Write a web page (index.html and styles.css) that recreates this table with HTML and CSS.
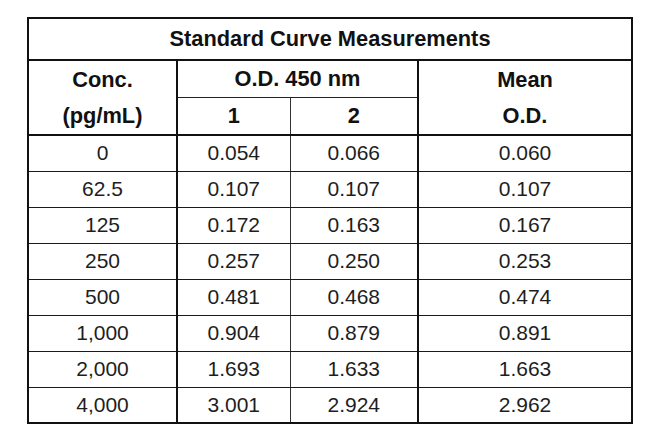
FILE: index.html
```html
<!DOCTYPE html>
<html>
<head>
<meta charset="utf-8">
<link rel="stylesheet" href="styles.css">
</head>
<body>
<div class="page">
  <table class="curve">
    <colgroup>
      <col class="c1">
      <col class="c2">
      <col class="c3">
      <col class="c4">
    </colgroup>
    <tr class="title-row">
      <th colspan="4" class="title">Standard Curve Measurements</th>
    </tr>
    <tr class="head1">
      <th rowspan="2" class="main-v two-line">Conc.<br>(pg/mL)</th>
      <th colspan="2" class="main-v sub-b">O.D. 450 nm</th>
      <th rowspan="2" class="two-line">Mean<br>O.D.</th>
    </tr>
    <tr class="head2">
      <th class="thin-v">1</th>
      <th class="main-v">2</th>
    </tr>
    <tr class="data first"><td class="main-v">0</td><td class="thin-v">0.054</td><td class="main-v">0.066</td><td>0.060</td></tr>
    <tr class="data"><td class="main-v">62.5</td><td class="thin-v">0.107</td><td class="main-v">0.107</td><td>0.107</td></tr>
    <tr class="data"><td class="main-v">125</td><td class="thin-v">0.172</td><td class="main-v">0.163</td><td>0.167</td></tr>
    <tr class="data"><td class="main-v">250</td><td class="thin-v">0.257</td><td class="main-v">0.250</td><td>0.253</td></tr>
    <tr class="data"><td class="main-v">500</td><td class="thin-v">0.481</td><td class="main-v">0.468</td><td>0.474</td></tr>
    <tr class="data"><td class="main-v">1,000</td><td class="thin-v">0.904</td><td class="main-v">0.879</td><td>0.891</td></tr>
    <tr class="data"><td class="main-v">2,000</td><td class="thin-v">1.693</td><td class="main-v">1.633</td><td>1.663</td></tr>
    <tr class="data last"><td class="main-v">4,000</td><td class="thin-v">3.001</td><td class="main-v">2.924</td><td>2.962</td></tr>
  </table>
</div>
</body>
</html>
```

FILE: styles.css
```css
html, body {
  margin: 0;
  padding: 0;
  background: #ffffff;
}

.page {
  padding: 17px 0 0 27px;
}

.curve {
  border-collapse: collapse;
  table-layout: fixed;
  width: 606px;
  border: 2px solid #111;
  font-family: "Liberation Sans", Arial, sans-serif;
  font-size: 21px;
  color: #1e1e1e;
}

.c1 { width: 149px; }
.c2 { width: 113px; }
.c3 { width: 128px; }
.c4 { width: 214px; }

.curve th,
.curve td {
  padding: 0;
  text-align: center;
  vertical-align: middle;
  font-weight: normal;
}

.curve th {
  font-weight: bold;
  font-size: 21.8px;
  color: #111;
}

.title-row { height: 42px; }
.title-row th { border-bottom: 2px solid #111; }

.head1 { height: 37px; }
.head2 { height: 38px; }
.head2 th { border-bottom: 2px solid #111; }

.two-line {
  line-height: 36px;
  border-bottom: 2px solid #111;
}

.sub-b { border-bottom: 1px solid #222; }

.main-v { border-right: 2px solid #111; }
.thin-v { border-right: 1px solid #333; }

.data { height: 36px; }
.data td { border-bottom: 1px solid #1a1a1a; }
.data.last td { border-bottom: 2px solid #111; }
```
